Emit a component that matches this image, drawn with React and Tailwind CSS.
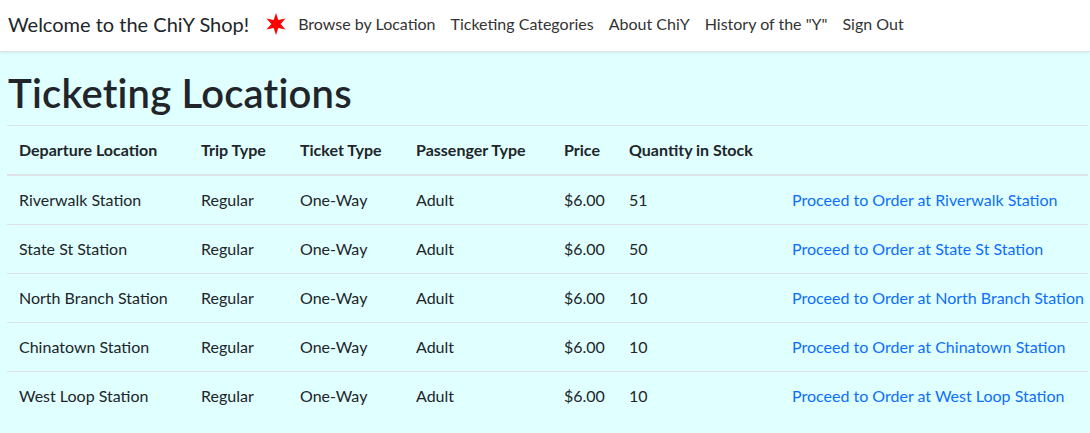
import React from "react";

const rows = [
  ["Riverwalk Station", "51"],
  ["State St Station", "50"],
  ["North Branch Station", "10"],
  ["Chinatown Station", "10"],
  ["West Loop Station", "10"],
];

function Star() {
  const pts = [];
  for (let i = 0; i < 12; i++) {
    const r = i % 2 === 0 ? 11 : 4.6;
    const a = (Math.PI / 6) * i - Math.PI / 2;
    pts.push(`${(12 + r * Math.cos(a)).toFixed(2)},${(12 + r * Math.sin(a)).toFixed(2)}`);
  }
  return (
    <svg width="24" height="24" viewBox="0 0 24 24" className="block">
      <polygon points={pts.join(" ")} fill="#ff0000" />
    </svg>
  );
}

export default function App() {
  return (
    <div className="min-h-screen w-[1090px] overflow-hidden bg-[#e0ffff] text-[#212529] font-['Lato','Noto_Sans',sans-serif]">
      <nav className="h-[52px] bg-white border-b border-[#dee2e6] shadow-[0_1px_3px_rgba(0,0,0,0.08)] flex items-center pl-2 pb-[3px]">
        <span className="text-[20px] leading-[30px] text-[#212529]">Welcome to the ChiY Shop!</span>
        <span className="ml-[15px] mr-[2px]"><Star /></span>
        <a className="px-2 text-[16px] text-[#333]">Browse by Location</a>
        <a className="pl-[7px] pr-2 text-[16px] text-[#333]">Ticketing Categories</a>
        <a className="pl-[7px] pr-2 text-[16px] text-[#333]">About ChiY</a>
        <a className="pl-[7px] pr-2 text-[16px] text-[#333]">History of the "Y"</a>
        <a className="pl-[7px] pr-2 text-[16px] text-[#333]">Sign Out</a>
      </nav>
      <div className="pl-[7px] pt-[17px]">
        <h1 className="text-[40px] leading-[48px] font-semibold tracking-[0.2px] mb-2 pl-[1px]">Ticketing Locations</h1>
        <table className="w-[1081px] table-fixed border-collapse text-[16px] leading-6">
          <colgroup>
            <col className="w-[182px]" />
            <col className="w-[99px]" />
            <col className="w-[116px]" />
            <col className="w-[148px]" />
            <col className="w-[65px]" />
            <col className="w-[163px]" />
            <col />
          </colgroup>
          <thead>
            <tr className="border-t border-[#dee2e6] border-b-2 border-b-[#dee2e6]">
              {["Departure Location", "Trip Type", "Ticket Type", "Passenger Type", "Price", "Quantity in Stock", ""].map((h, i) => (
                <th key={i} className="text-left font-bold px-3 py-3 whitespace-nowrap">{h}</th>
              ))}
            </tr>
          </thead>
          <tbody>
            {rows.map(([name, qty], i) => (
              <tr key={name} className={i < rows.length - 1 ? "border-b border-[#dee2e6]" : ""}>
                <td className="px-3 py-3 whitespace-nowrap">{name}</td>
                <td className="px-3 py-3">Regular</td>
                <td className="px-3 py-3">One-Way</td>
                <td className="px-3 py-3">Adult</td>
                <td className="px-3 py-3">$6.00</td>
                <td className="px-3 py-3">{qty}</td>
                <td className="px-3 py-3 whitespace-nowrap">
                  <a className="text-[#0d6efd]">Proceed to Order at {name}</a>
                </td>
              </tr>
            ))}
          </tbody>
        </table>
      </div>
    </div>
  );
}
